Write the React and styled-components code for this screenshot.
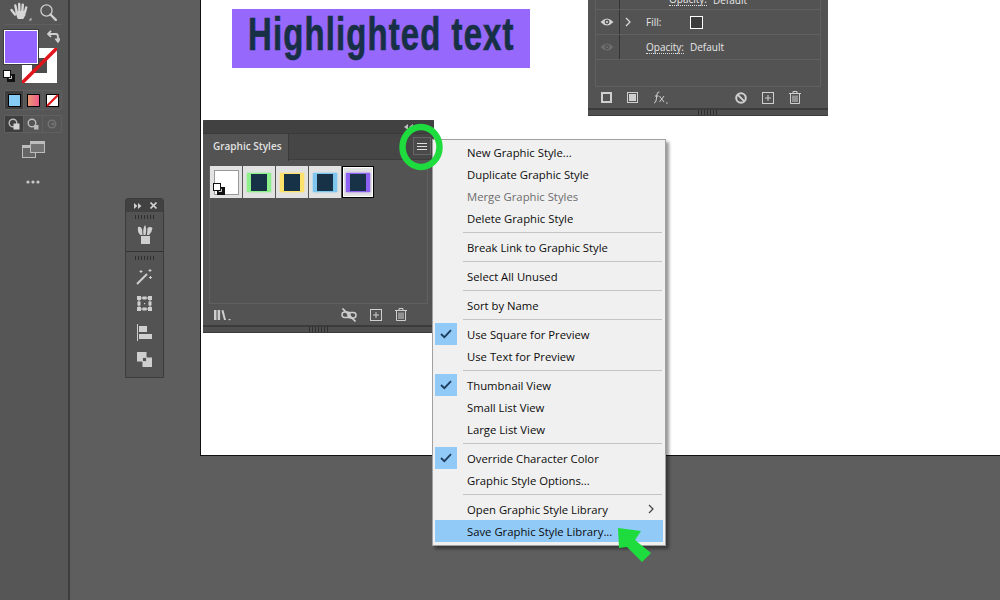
import React from "react";
import styled, { createGlobalStyle } from "styled-components";

const Global = createGlobalStyle`
  html, body { margin: 0; padding: 0; background: #5c5c5c; }
  * { box-sizing: border-box; }
`;

const Stage = styled.div`
  position: relative;
  width: 1000px;
  height: 600px;
  overflow: hidden;
  background: #5e5e5e;
  display: flex;
  font-family: "Open Sans", "Noto Sans", sans-serif;
`;

/* ---------- left tools ---------- */
const Tools = styled.aside`
  width: 70px;
  height: 600px;
  flex: none;
  background: #565656;
  border-right: 2px solid #3d3d3d;
  display: flex;
  flex-direction: column;
  align-items: flex-start;
`;
const ToolRow = styled.div`
  display: flex;
  align-items: center;
  height: 24px;
  padding-left: 9px;
  gap: 7px;
`;
const Rule = styled.div`
  width: 58px;
  height: 1px;
  margin: 0 0 0 4px;
  background: #5f5f5f;
`;
const SwatchArea = styled.div`
  position: relative;
  width: 68px;
  height: 58px;
  margin-top: 5px;
`;
const FillSwatch = styled.div`
  position: absolute;
  left: 4px;
  top: 0;
  width: 34px;
  height: 34px;
  background: #9466ff;
  border: 1px solid #fff;
  outline: 1px solid #3c3c3c;
  z-index: 2;
`;
const StrokeSwatch = styled.svg`
  position: absolute;
  left: 22px;
  top: 18px;
`;
const SwapIcon = styled.svg`
  position: absolute;
  left: 47px;
  top: 0;
`;
const DefaultIcon = styled.svg`
  position: absolute;
  left: 3px;
  top: 40px;
`;
const ButtonGroup = styled.div`
  display: flex;
  margin: ${(p) => p.$mt}px 0 0 4px;
  width: 58px;
  height: ${(p) => p.$h}px;
  border: 1px solid #606060;
  border-radius: 2px;
`;
const GroupCell = styled.div`
  flex: 1;
  display: flex;
  align-items: center;
  justify-content: center;
  background: ${(p) => (p.$on ? "#3e3e3e" : "transparent")};
  border-right: 1px solid #5f5f5f;
  &:last-child { border-right: 0; }
`;
const ModeChip = styled.div`
  width: 13px;
  height: 13px;
  border: 1px solid #000;
  background: ${(p) => p.$bg};
`;
const CenterIcon = styled.div`
  width: 66px;
  display: flex;
  justify-content: center;
  margin-top: ${(p) => p.$mt}px;
`;

/* ---------- canvas ---------- */
const Artboard = styled.div`
  position: absolute;
  left: 200px;
  top: -1px;
  width: 820px;
  height: 457px;
  background: #fff;
  border: 1px solid #111;
`;
const HighlightBox = styled.div`
  position: absolute;
  left: 31px;
  top: 9px;
  width: 298px;
  height: 59px;
  background: #9668fb;
  display: flex;
  align-items: center;
  justify-content: center;
  padding-bottom: 10px;
`;
const HighlightText = styled.span`
  display: inline-block;
  flex: none;
  color: #173046;
  font-family: "Liberation Sans", sans-serif;
  font-weight: 700;
  font-size: 47px;
  -webkit-text-stroke: 0.7px #173046;
  letter-spacing: 1.6px;
  white-space: nowrap;
  transform: scaleX(0.7);
`;

/* ---------- floating panels ---------- */
const Panel = styled.section`
  position: absolute;
  left: ${(p) => p.$x}px;
  top: ${(p) => p.$y}px;
  width: ${(p) => p.$w}px;
  height: ${(p) => p.$h}px;
  background: #535353;
  display: flex;
  flex-direction: column;
  color: #e6e6e6;
`;
const PanelTop = styled.div`
  height: 13px;
  flex: none;
  background: #414141;
  border-radius: 3px 3px 0 0;
  display: flex;
  justify-content: flex-end;
  align-items: center;
  padding-right: 21px;
`;
const TabBar = styled.div`
  height: 27px;
  flex: none;
  background: #464646;
  display: flex;
  justify-content: space-between;
  border-top: 1px solid #3a3a3a;
  border-bottom: 1px solid #3c3c3c;
`;
const Tab = styled.div`
  width: 86px;
  height: 27px;
  background: #535353;
  border-right: 1px solid #3a3a3a;
  padding-left: 10px;
  font-size: 10px;
  font-weight: 600;
  line-height: 24px;
  color: #e2e2e2;
`;
const MenuButton = styled.div`
  width: 18px;
  height: 18px;
  margin: 3px 3px 0 0;
  border: 1px solid #666;
  background: #4a4a4a;
  display: flex;
  flex-direction: column;
  justify-content: center;
  gap: 2px;
  padding: 0 3px;
  & > i { display: block; height: 1px; background: #ddd; }
`;
const Well = styled.div`
  flex: 1;
  margin: 6px 6px 0 6px;
  border: 1px solid #606060;
  border-top: 0;
  display: flex;
  align-items: flex-start;
  min-height: 0;
`;
const Thumbs = styled.div`
  display: flex;
  gap: 1px;
`;
const Thumb = styled.div`
  width: 32px;
  height: 32px;
  background: #e2e2e2;
  display: flex;
  align-items: center;
  justify-content: center;
  position: relative;
  ${(p) => p.$selected && "border: 1px solid #000; box-shadow: inset 0 0 0 1px #fff;"}
`;
const ThumbInner = styled.div`
  width: 24px;
  height: 19px;
  background: #173246;
  border-left: 4px solid ${(p) => p.$c};
  border-right: 4px solid ${(p) => p.$c};
  border-top: 1px solid ${(p) => p.$c};
  border-bottom: 1px solid ${(p) => p.$c};
  box-shadow: 0 0 2px ${(p) => p.$c};
`;
const BlankInner = styled.div`
  width: 25px;
  height: 25px;
  background: #fff;
  border: 1px solid #999;
`;
const ThumbBadge = styled.svg`
  position: absolute;
  left: 3px;
  bottom: 3px;
`;
const PanelFoot = styled.div`
  height: 21px;
  flex: none;
  display: flex;
  align-items: center;
  padding: 0 ${(p) => p.$r}px 0 ${(p) => p.$l}px;
  gap: ${(p) => p.$gap}px;
`;
const Spacer = styled.div`
  flex: 1;
`;
const Grip = styled.div`
  height: 8px;
  flex: none;
  background: #4f4f4f;
  border-top: 2px solid #3b3b3b;
  border-bottom: 1px solid #3b3b3b;
  display: flex;
  justify-content: center;
`;
const GripMark = styled.div`
  width: ${(p) => p.$w || 20}px;
  height: ${(p) => p.$h || 5}px;
  background: repeating-linear-gradient(90deg, #2f2f2f 0 1px, transparent 1px 3px);
`;

/* ---------- appearance panel ---------- */
const ApList = styled.div`
  flex: 1;
  margin: 0 7px;
  border: 1px solid #606060;
  border-top: 0;
  display: flex;
  flex-direction: column;
  min-height: 0;
`;
const ApRow = styled.div`
  height: ${(p) => p.$h}px;
  flex: none;
  border-bottom: 1px solid #606060;
  display: grid;
  grid-template-columns: 24px 1fr;
  font-size: 10px;
  color: #e6e6e6;
`;
const EyeCell = styled.div`
  border-right: 1px solid #333;
  display: flex;
  align-items: center;
  justify-content: center;
  padding-right: 2px;
`;
const ApContent = styled.div`
  display: flex;
  align-items: center;
  gap: 6px;
`;
const Chevron = styled.svg`
  margin-left: 5px;
`;
const FillLabel = styled.span`
  margin-left: 9px;
  width: 38px;
`;
const FillChip = styled.div`
  width: 13px;
  height: 13px;
  background: #3c3c3c;
  border: 1px solid #fff;
`;
const Dotted = styled.span`
  margin-left: ${(p) => p.$ml}px;
  border-bottom: 1px dotted #ddd;
  line-height: 12px;
`;

/* ---------- mini vertical panel ---------- */
const MiniPanel = styled(Panel)`
  border: 1px solid #3c3c3c;
  border-radius: 3px 3px 0 0;
  align-items: center;
`;
const MiniTop = styled.div`
  width: 100%;
  height: 13px;
  background: #414141;
  flex: none;
  display: flex;
  justify-content: space-between;
  align-items: center;
  padding: 0 6px 0 8px;
`;
const MiniGrip = styled(GripMark)`
  margin-top: ${(p) => p.$mt}px;
  flex: none;
`;
const MiniSlot = styled.div`
  margin-top: ${(p) => p.$mt}px;
  height: 20px;
  display: flex;
  align-items: center;
  flex: none;
`;
const MiniRule = styled.div`
  width: 100%;
  height: 1px;
  background: #333;
  margin-top: ${(p) => p.$mt}px;
  flex: none;
`;

/* ---------- context menu ---------- */
const Menu = styled.nav`
  position: absolute;
  left: 432px;
  top: 139px;
  width: 234px;
  height: 407px;
  background: #f0f0f0;
  border: 1px solid #a0a0a0;
  padding: 1px 2px 2px;
  box-shadow: 3px 3px 3px rgba(0, 0, 0, 0.4);
  display: flex;
  flex-direction: column;
  font-family: "Open Sans", "Noto Sans", sans-serif;
  font-size: 11.3px;
`;
const Item = styled.div`
  height: 22px;
  flex: none;
  display: flex;
  align-items: center;
  color: ${(p) => (p.$off ? "#6d6d6d" : "#0c0c0c")};
  background: ${(p) => (p.$hot ? "#91c9f7" : "transparent")};
  white-space: nowrap;
  position: relative;
`;
const Check = styled.div`
  width: 22px;
  height: 22px;
  flex: none;
  background: ${(p) => (p.$on ? "#91c9f7" : "transparent")};
  display: flex;
  align-items: center;
  justify-content: center;
  margin-right: 10px;
`;
const Sep = styled.div`
  height: 1px;
  flex: none;
  margin: 3px 1px 3px 28px;
  background: #c4c4c4;
`;
const SubArrow = styled.svg`
  position: absolute;
  right: 9px;
  top: 6px;
`;
const Annotation = styled.svg`
  position: absolute;
  left: 0;
  top: 0;
  pointer-events: none;
`;

const G = "#cfcfcf";
const GREEN = "#1fdc3e";

const Hand = () => (
  <svg width="24" height="22" viewBox="0 0 24 22">
    <g stroke="#d6d6d6" strokeLinecap="round" fill="none">
      <path d="M2.5 9 L6 13.5" strokeWidth="2.4" />
      <path d="M7.5 10 L6.3 4.5" strokeWidth="2.4" />
      <path d="M10.4 10 L10.2 3" strokeWidth="2.4" />
      <path d="M13.3 10 L13.8 3.8" strokeWidth="2.4" />
      <path d="M16 11 L17.2 6.5" strokeWidth="2.4" />
    </g>
    <path d="M6 10.5 L17 9.5 L16.3 14.5 L14.2 18 H8.8 Z" fill="#d6d6d6" />
    <path d="M19.5 19.5 h3 v-3 z" fill="#bbb" />
  </svg>
);
const Zoom = () => (
  <svg width="17" height="17" viewBox="0 0 17 17" fill="none" stroke="#cfcfcf">
    <circle cx="6.5" cy="6.5" r="5.6" strokeWidth="1.3" />
    <path d="M10.5 10.5 L15.8 15.8" strokeWidth="2.4" strokeLinecap="round" />
  </svg>
);
const Eye = ({ c = "#d4d4d4" }) => (
  <svg width="14" height="10" viewBox="0 0 14 10">
    <path d="M0.5 5 Q7 -2 13.5 5 Q7 12 0.5 5 Z" fill={c} />
    <circle cx="7" cy="5" r="2.4" fill="#535353" />
    <circle cx="7" cy="5" r="1.1" fill={c} />
  </svg>
);
const Plus = () => (
  <svg width="12" height="12" viewBox="0 0 12 12" fill="none" stroke={G}>
    <rect x="0.5" y="0.5" width="11" height="11" />
    <path d="M3 6 H9 M6 3 V9" />
  </svg>
);
const Trash = () => (
  <svg width="12" height="13" viewBox="0 0 12 13" fill="none" stroke={G}>
    <path d="M0 2.5 H12 M4 2.5 V0.5 H8 V2.5 M1.5 2.5 V12.5 H10.5 V2.5 M4 4.5 V11 M6 4.5 V11 M8 4.5 V11" />
  </svg>
);
const CheckMark = () => (
  <svg width="12" height="10" viewBox="0 0 12 10" fill="none" stroke="#1d3d5c" strokeWidth="1.8">
    <path d="M1 5 L4.4 8.2 L11 1.2" />
  </svg>
);

const styleColors = ["#8ef08a", "#ffe26b", "#7ec6ee", "#8d61f2"];

const menu = [
  [["New Graphic Style..."], ["Duplicate Graphic Style"], ["Merge Graphic Styles", "off"], ["Delete Graphic Style"]],
  [["Break Link to Graphic Style"]],
  [["Select All Unused"]],
  [["Sort by Name"]],
  [["Use Square for Preview", "check"], ["Use Text for Preview"]],
  [["Thumbnail View", "check"], ["Small List View"], ["Large List View"]],
  [["Override Character Color", "check"], ["Graphic Style Options..."]],
  [["Open Graphic Style Library", "sub"], ["Save Graphic Style Library...", "hot"]],
];

export default function App() {
  return (
    <Stage>
      <Global />
      <Tools>
        <ToolRow>
          <Hand />
          <Zoom />
        </ToolRow>
        <Rule />
        <SwatchArea>
          <FillSwatch />
          <StrokeSwatch width="35" height="35" viewBox="0 0 35 35">
            <rect width="35" height="35" fill="#fff" />
            <rect x="10" y="10" width="15" height="15" fill="#4c4c4c" />
            <path d="M0 35 L35 0" stroke="#e0141a" strokeWidth="3.4" />
          </StrokeSwatch>
          <SwapIcon width="13" height="13" viewBox="0 0 13 13" fill="none" stroke="#cfcfcf" strokeWidth="1.8">
            <path d="M2 4 H9 Q11 4 11 7 V11" />
            <path d="M4 0.8 L1 4 L4 6.8 M8.5 8.6 L11 11.8 L13 8.6" />
          </SwapIcon>
          <DefaultIcon width="12" height="12" viewBox="0 0 12 12">
            <rect x="4.5" y="4.5" width="7" height="7" fill="#111" stroke="#111" />
            <rect x="5.8" y="5.8" width="3" height="3" fill="#fff" />
            <rect x="0.5" y="0.5" width="7" height="7" fill="#fff" stroke="#111" />
          </DefaultIcon>
        </SwatchArea>
        <ButtonGroup $mt={2} $h={20}>
          <GroupCell $on><ModeChip $bg="#86cbf6" /></GroupCell>
          <GroupCell><ModeChip $bg="linear-gradient(90deg,#e99a76,#f25a88)" /></GroupCell>
          <GroupCell>
            <svg width="13" height="13" viewBox="0 0 13 13">
              <rect x="0.5" y="0.5" width="12" height="12" fill="#fff" stroke="#000" />
              <path d="M1 12 L12 1" stroke="#e0141a" strokeWidth="2.2" />
            </svg>
          </GroupCell>
        </ButtonGroup>
        <ButtonGroup $mt={5} $h={18}>
          <GroupCell $on>
            <svg width="12" height="12" viewBox="0 0 12 12">
              <circle cx="5" cy="5" r="3.8" fill="none" stroke="#bbb" strokeWidth="1.4" />
              <rect x="5.5" y="5.5" width="6" height="6" fill="#d2d2d2" />
            </svg>
          </GroupCell>
          <GroupCell>
            <svg width="12" height="12" viewBox="0 0 12 12">
              <circle cx="5" cy="5" r="3.8" fill="#555" stroke="#bbb" strokeWidth="1.4" />
              <rect x="7" y="7" width="4.5" height="4.5" fill="#bbb" />
            </svg>
          </GroupCell>
          <GroupCell>
            <svg width="10" height="10" viewBox="0 0 10 10">
              <circle cx="5" cy="5" r="3.8" fill="none" stroke="#747474" strokeWidth="1.4" />
              <circle cx="6" cy="5" r="1.6" fill="#747474" />
            </svg>
          </GroupCell>
        </ButtonGroup>
        <CenterIcon $mt={8}>
          <svg width="23" height="17" viewBox="0 0 23 17" fill="none" stroke="#bdbdbd">
            <rect x="0.5" y="4.5" width="13" height="12" fill="#666" />
            <rect x="8.5" y="0.5" width="14" height="11" fill="#737373" />
            <path d="M8.5 2 H22.5" strokeWidth="2" />
            <path d="M0.5 6 H8" strokeWidth="2" />
          </svg>
        </CenterIcon>
        <CenterIcon $mt={22}>
          <svg width="14" height="4" viewBox="0 0 14 4" fill="#c9c9c9">
            <circle cx="2" cy="2" r="1.6" />
            <circle cx="7" cy="2" r="1.6" />
            <circle cx="12" cy="2" r="1.6" />
          </svg>
        </CenterIcon>
      </Tools>

      <Artboard>
        <HighlightBox>
          <HighlightText>Highlighted text</HighlightText>
        </HighlightBox>
      </Artboard>

      <Panel $x={588} $y={-10} $w={240} $h={126}>
        <ApList>
          <ApRow $h={20}>
            <EyeCell />
            <ApContent>
              <Dotted $ml={49}>Opacity:</Dotted>
              <span>Default</span>
            </ApContent>
          </ApRow>
          <ApRow $h={25}>
            <EyeCell><Eye /></EyeCell>
            <ApContent>
              <Chevron width="6" height="10" viewBox="0 0 6 10" fill="none" stroke="#ddd" strokeWidth="1.2">
                <path d="M1 1 L5 5 L1 9" />
              </Chevron>
              <FillLabel>Fill:</FillLabel>
              <FillChip />
            </ApContent>
          </ApRow>
          <ApRow $h={25}>
            <EyeCell><Eye c="#6e6e6e" /></EyeCell>
            <ApContent>
              <Dotted $ml={26}>Opacity:</Dotted>
              <span>Default</span>
            </ApContent>
          </ApRow>
        </ApList>
        <PanelFoot $l={13} $r={27} $gap={15}>
          <svg width="11" height="11" viewBox="0 0 11 11" fill="none" stroke={G} strokeWidth="2"><rect x="1" y="1" width="9" height="9" /></svg>
          <svg width="11" height="11" viewBox="0 0 11 11"><rect x="0.5" y="0.5" width="10" height="10" fill="none" stroke={G} /><rect x="2" y="2" width="7" height="7" fill={G} /></svg>
          <svg width="15" height="13" viewBox="0 0 15 13" fill="none" stroke={G} strokeWidth="1">
            <path d="M1 12 Q3 12 3.4 8 L4 3 Q4.4 1 6.4 1 M1.8 5 H5.5 M6.5 5 L11 11 M11 5 L6.5 11 M13 12 h1.6" />
          </svg>
          <Spacer />
          <svg width="12" height="12" viewBox="0 0 12 12" fill="none" stroke={G} strokeWidth="2"><circle cx="6" cy="6" r="4.8" /><path d="M2.6 2.6 L9.4 9.4" /></svg>
          <Plus />
          <Trash />
        </PanelFoot>
        <Grip><GripMark /></Grip>
      </Panel>

      <Panel $x={203} $y={120} $w={231} $h={213}>
        <PanelTop>
          <svg width="9" height="6" viewBox="0 0 9 6" fill="#bdbdbd"><path d="M4 0 L0 3 L4 6 Z M9 0 L5 3 L9 6 Z" /></svg>
        </PanelTop>
        <TabBar>
          <Tab>Graphic Styles</Tab>
          <MenuButton><i /><i /><i /></MenuButton>
        </TabBar>
        <Well>
          <Thumbs>
            <Thumb>
              <BlankInner />
              <ThumbBadge width="12" height="12" viewBox="0 0 12 12">
                <rect x="4.5" y="4.5" width="7" height="7" fill="#111" stroke="#111" />
                <rect x="5.8" y="5.8" width="3" height="3" fill="#fff" />
                <rect x="0.5" y="0.5" width="7" height="7" fill="#fff" stroke="#111" />
              </ThumbBadge>
            </Thumb>
            {styleColors.map((c, i) => (
              <Thumb key={c} $selected={i === 3}>
                <ThumbInner $c={c} />
              </Thumb>
            ))}
          </Thumbs>
        </Well>
        <PanelFoot $l={11} $r={27} $gap={13}>
          <svg width="17" height="12" viewBox="0 0 17 12" fill={G}>
            <rect x="0" y="1" width="2.5" height="10" />
            <rect x="3.6" y="1" width="2.5" height="10" />
            <path d="M7.4 1.4 L9.4 1 L12 11 L10 11 Z" />
            <path d="M14 10 h3 l-1.5 1.6 z" />
          </svg>
          <Spacer />
          <svg width="16" height="14" viewBox="0 0 16 14" fill="none" stroke={G} strokeWidth="1.5">
            <rect x="1" y="4" width="8" height="5.4" rx="2.7" />
            <rect x="7" y="4.6" width="8" height="5.4" rx="2.7" />
            <path d="M1.5 0.5 L14.5 13.5" strokeWidth="1.7" />
          </svg>
          <Plus />
          <Trash />
        </PanelFoot>
        <Grip><GripMark /></Grip>
      </Panel>

      <MiniPanel as="section" $x={125} $y={198} $w={39} $h={180}>
        <MiniTop>
          <svg width="8" height="6" viewBox="0 0 8 6" fill="#cfcfcf"><path d="M0 0 L3.4 3 L0 6 Z M4 0 L7.4 3 L4 6 Z" /></svg>
          <svg width="7" height="7" viewBox="0 0 7 7" stroke="#cfcfcf" strokeWidth="1.6"><path d="M0.5 0.5 L6.5 6.5 M6.5 0.5 L0.5 6.5" /></svg>
        </MiniTop>
        <MiniGrip $mt={3} $w={20} $h={4} />
        <MiniSlot $mt={5}>
          <svg width="16" height="20" viewBox="0 0 16 20" fill={G}>
            <rect x="4" y="12" width="9" height="8" />
            <path d="M3.5 11 Q0 8 1 3 Q3.5 2 5 5 L5.5 11 Z" />
            <path d="M6.5 11 Q5.5 5 8 1 Q10 4 8.5 11 Z" />
            <path d="M10 11 L10.5 4 Q13 2 15.5 4 Q15 8 12 11 Z" />
          </svg>
        </MiniSlot>
        <MiniRule $mt={7} />
        <MiniGrip $mt={4} $w={20} $h={4} />
        <MiniSlot $mt={6}>
          <svg width="17" height="17" viewBox="0 0 17 17" fill="none" stroke={G}>
            <path d="M1 16 L11 6" strokeWidth="2" />
            <path d="M5 2 v3 M3.5 3.5 h3 M14 1 v3 M12.5 2.5 h3 M14.5 8 v3 M13 9.5 h3" />
          </svg>
        </MiniSlot>
        <MiniSlot $mt={7}>
          <svg width="15" height="15" viewBox="0 0 15 15" fill={G}>
            <path d="M2 2 H13 V13 H2 Z" fill="none" stroke={G} />
            <rect x="0" y="0" width="4" height="4" />
            <rect x="11" y="0" width="4" height="4" />
            <rect x="0" y="11" width="4" height="4" />
            <rect x="11" y="11" width="4" height="4" />
            <rect x="5.5" y="0.5" width="4" height="3" />
            <rect x="5.5" y="11.5" width="4" height="3" />
            <rect x="0.5" y="5.5" width="3" height="4" />
            <rect x="11.5" y="5.5" width="3" height="4" />
            <rect x="7" y="7" width="1.2" height="1.2" />
          </svg>
        </MiniSlot>
        <MiniSlot $mt={9}>
          <svg width="15" height="17" viewBox="0 0 15 17" fill={G}>
            <rect x="0" y="0" width="1" height="17" />
            <rect x="2" y="2" width="8" height="6" />
            <rect x="2" y="10" width="13" height="5" />
          </svg>
        </MiniSlot>
        <MiniSlot $mt={7}>
          <svg width="15" height="15" viewBox="0 0 15 15">
            <rect x="0" y="0" width="9.5" height="9.5" fill={G} />
            <rect x="5.5" y="5.5" width="9.5" height="9.5" fill={G} />
            <rect x="5.5" y="5.5" width="4" height="4" fill="#535353" stroke={G} strokeWidth="0.8" />
          </svg>
        </MiniSlot>
      </MiniPanel>

      <Menu>
        {menu.map((group, gi) => (
          <React.Fragment key={gi}>
            {gi > 0 && <Sep />}
            {group.map(([label, kind]) => (
              <Item key={label} $off={kind === "off"} $hot={kind === "hot"}>
                <Check $on={kind === "check"}>{kind === "check" && <CheckMark />}</Check>
                {label}
                {kind === "sub" && (
                  <SubArrow width="6" height="10" viewBox="0 0 6 10" fill="none" stroke="#444" strokeWidth="1.2">
                    <path d="M1 1 L5 5 L1 9" />
                  </SubArrow>
                )}
              </Item>
            ))}
          </React.Fragment>
        ))}
      </Menu>

      <Annotation width="1000" height="600" viewBox="0 0 1000 600">
        <ellipse cx="421" cy="147" rx="18.5" ry="20" fill="none" stroke={GREEN} strokeWidth="6.5" />
        <path d="M618 528 L641 531 L635 540 L651 553 L642 562 L627 547 L619 548 Z" fill={GREEN} />
      </Annotation>
    </Stage>
  );
}
